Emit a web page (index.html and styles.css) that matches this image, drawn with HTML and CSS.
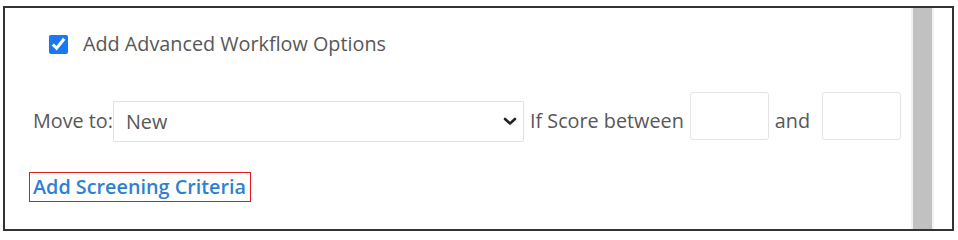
FILE: index.html
```html
<!DOCTYPE html>
<html lang="en">
<head>
<meta charset="utf-8">
<title>Workflow Options</title>
<link rel="stylesheet" href="styles.css">
</head>
<body>
<div class="frame">
  <div class="content">
    <label class="check-row">
      <input type="checkbox" class="check" checked>
      <span class="check-label">Add Advanced Workflow Options</span>
    </label>
    <div class="move-row">
      <span class="label label-move">Move to:</span>
      <div class="select-wrap">
        <select class="select">
          <option>New</option>
        </select>
        <svg class="chevron" width="14" height="9" viewBox="0 0 14 9" aria-hidden="true">
          <path d="M2 2 L7 6.5 L12 2" fill="none" stroke="#222" stroke-width="2.6" stroke-linecap="round" stroke-linejoin="round"/>
        </svg>
      </div>
      <span class="label label-score">If Score between</span>
      <input type="text" class="score-input score-first">
      <span class="label label-and">and</span>
      <input type="text" class="score-input">
    </div>
    <a class="criteria-link" href="#">Add Screening Criteria</a>
  </div>
  <div class="scrollbar"><div class="thumb"></div></div>
</div>
</body>
</html>
```

FILE: styles.css
```css
html, body {
  margin: 0;
  padding: 0;
  background: #ffffff;
}

body {
  font-family: "Open Sans", "DejaVu Sans", sans-serif;
  font-size: 19.8px;
  color: #575757;
}

.frame {
  box-sizing: border-box;
  margin: 6px 0 0 3px;
  width: 951px;
  height: 225px;
  border: 2px solid #333333;
  display: flex;
  background: #ffffff;
}

.content {
  flex: 1;
  display: flex;
  flex-direction: column;
  align-items: flex-start;
  padding-top: 22px;
}

.check-row {
  display: flex;
  align-items: center;
  height: 28px;
  margin-left: 44px;
  cursor: pointer;
}

.check {
  width: 19px;
  height: 19px;
  margin: 0 15px 0 0;
  accent-color: #1a78f2;
}

.check-label {
  line-height: 28px;
}

.move-row {
  display: flex;
  align-items: flex-end;
  height: 50px;
  margin-top: 34px;
  margin-left: 28px;
}

.label {
  line-height: 27px;
  margin-bottom: 8px;
  white-space: nowrap;
}

.label-move {
  margin-right: 0;
}

.label-score {
  margin-left: 6px;
  margin-right: 6px;
}

.label-and {
  margin-left: 6px;
  margin-right: 12px;
}

.select-wrap {
  position: relative;
  width: 411px;
  height: 41px;
}

.select {
  box-sizing: border-box;
  width: 100%;
  height: 100%;
  margin: 0;
  padding: 0 12px;
  border: 1px solid #e2e2e2;
  border-radius: 1px;
  background: #ffffff;
  appearance: none;
  -webkit-appearance: none;
  font-family: inherit;
  font-size: 19.8px;
  color: #575757;
}

.chevron {
  position: absolute;
  right: 7px;
  top: 16px;
  pointer-events: none;
}

.score-input {
  box-sizing: border-box;
  width: 79px;
  height: 48px;
  margin: 0 0 2px 0;
  border: 1px solid #e4e4e4;
  border-radius: 3px;
  background: #ffffff;
}

.criteria-link {
  margin-top: 30px;
  margin-left: 24px;
  box-sizing: border-box;
  height: 30px;
  padding: 2px 4px 2px 3px;
  border: 1px solid #e8141c;
  line-height: 24px;
  font-weight: 600;
  color: #2f7fd2;
  text-decoration: none;
  white-space: nowrap;
}

.scrollbar {
  width: 23px;
  box-sizing: border-box;
  padding: 0 2px;
  margin-right: 18px;
  background: #f1f1f1;
}

.thumb {
  height: 100%;
  background: #c1c1c1;
}
```
